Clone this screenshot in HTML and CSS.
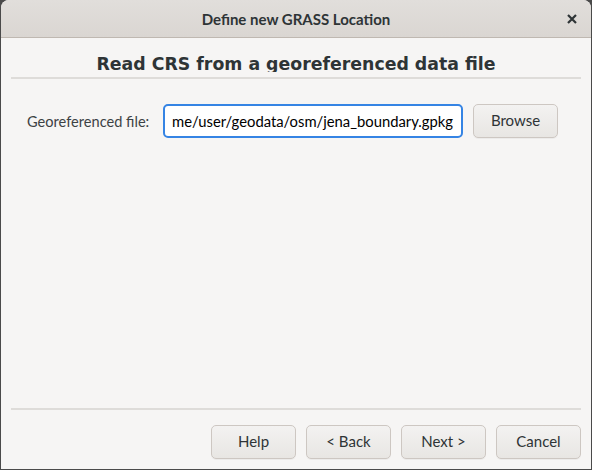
FILE: index.html
```html
<!DOCTYPE html>
<html lang="en">
<head>
<meta charset="utf-8">
<title>Define new GRASS Location</title>
<link rel="stylesheet" href="styles.css">
</head>
<body>
<div class="window">
  <header class="titlebar">
    <span class="title">Define new GRASS Location</span>
    <span class="close" aria-label="Close">
      <svg width="10" height="10" viewBox="0 0 10 10"><path d="M1 1 L9 9 M9 1 L1 9" stroke="#2e3436" stroke-width="2.2" stroke-linecap="butt" fill="none"/></svg>
    </span>
  </header>
  <main class="content">
    <div class="heading-box"><h1 class="heading">Read CRS from a georeferenced data file</h1></div>
    <div class="rule"></div>
    <div class="file-row">
      <label class="file-label">Georeferenced file:</label>
      <div class="entry"><span class="entry-text">me/user/geodata/osm/jena_boundary.gpkg</span></div>
      <button class="btn">Browse</button>
    </div>
    <div class="spacer"></div>
    <div class="rule"></div>
    <div class="actions">
      <button class="btn">Help</button>
      <button class="btn">&lt; Back</button>
      <button class="btn">Next &gt;</button>
      <button class="btn">Cancel</button>
    </div>
  </main>
</div>
</body>
</html>
```
FILE: styles.css
```css
html, body {
  margin: 0;
  padding: 0;
  width: 592px;
  height: 470px;
  overflow: hidden;
  background: #4a4a4a;
}
body {
  font-family: "Lato", "Noto Sans", sans-serif;
  color: #2e3436;
}
.window {
  margin: 0 1px 1px 1px;
  width: 590px;
  height: 469px;
  background: #f6f5f4;
  border-radius: 8px 8px 0 0;
  display: flex;
  flex-direction: column;
  overflow: hidden;
}
.titlebar {
  height: 37px;
  flex: none;
  background: linear-gradient(#e1dedb, #dad6d2);
  border-bottom: 1px solid #bfb8b1;
  display: flex;
  align-items: center;
  justify-content: center;
  position: relative;
}
.title {
  font-size: 15px;
  font-weight: 700;
  color: #2e3436;
  padding-top: 1px;
}
.close {
  position: absolute;
  right: 14px;
  top: 14px;
  width: 10px;
  height: 10px;
  display: flex;
}
.content {
  flex: 1;
  display: flex;
  flex-direction: column;
  padding: 0 10px 10px 10px;
}
.heading-box {
  height: 34px;
  overflow: hidden;
  display: flex;
  align-items: flex-end;
  justify-content: center;
}
.heading {
  margin: 0;
  font-family: "DejaVu Sans", sans-serif;
  font-weight: bold;
  font-size: 17.33px;
  line-height: 20px;
  color: #2e3436;
  position: relative;
  top: 2px;
}
.rule {
  height: 2px;
  background: #dedcd9;
  flex: none;
  margin-top: 5px;
}
.file-row {
  display: flex;
  align-items: center;
  margin-top: 25px;
  padding-left: 16px;
  height: 34px;
}
.file-label {
  width: 136px;
  flex: none;
  font-size: 14.6px;
  color: #3d4244;
}
.entry {
  width: 300px;
  height: 34px;
  box-sizing: border-box;
  border: 2px solid #3584e4;
  border-radius: 5px;
  background: #ffffff;
  display: flex;
  align-items: center;
  padding-left: 7px;
  overflow: hidden;
  white-space: nowrap;
}
.entry-text {
  font-size: 14.8px;
  color: #000;
}
.btn {
  width: 85px;
  height: 34px;
  box-sizing: border-box;
  border: 1px solid #cdc7c2;
  border-radius: 5px;
  background: linear-gradient(#f3f2f1, #e8e6e3);
  box-shadow: 0 1px 0 rgba(0,0,0,0.04);
  font-family: "Lato", "Noto Sans", sans-serif;
  font-size: 15px;
  line-height: 28px;
  padding: 0 0 2px 0;
  color: #2e3436;
  flex: none;
}
.file-row .btn {
  margin-left: 10px;
}
.spacer {
  flex: 1;
}
.actions {
  display: flex;
  justify-content: flex-end;
  gap: 10px;
  margin-top: 15px;
}
```
